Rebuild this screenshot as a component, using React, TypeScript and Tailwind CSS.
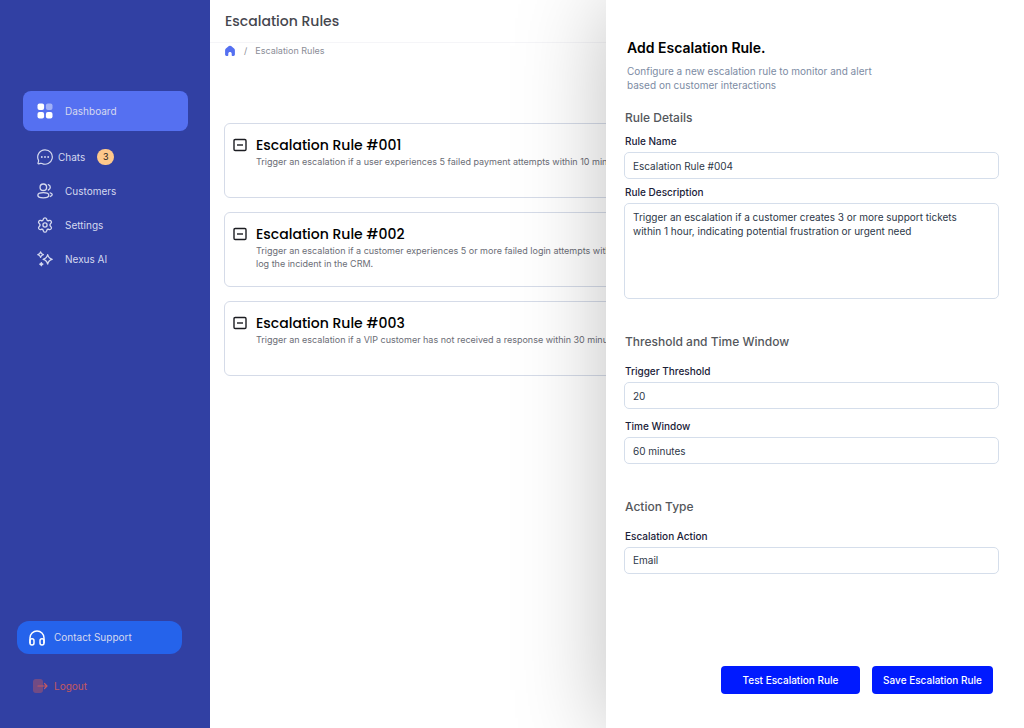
import type { ReactNode } from "react";

const iconBase = {
  viewBox: "0 0 24 24",
  fill: "none",
  stroke: "currentColor",
  strokeWidth: 1.6,
  strokeLinecap: "round" as const,
  strokeLinejoin: "round" as const,
  "aria-hidden": true,
};

function GridIcon() {
  return (
    <svg viewBox="0 0 16 16" className="size-4 shrink-0" fill="currentColor" aria-hidden="true">
      <rect x="0.5" y="0.5" width="6.6" height="6.6" rx="2" />
      <rect x="8.9" y="0.5" width="6.6" height="6.6" rx="2" opacity="0.45" />
      <rect x="0.5" y="8.9" width="6.6" height="6.6" rx="2" />
      <rect x="8.9" y="8.9" width="6.6" height="6.6" rx="2" />
    </svg>
  );
}

function ChatIcon() {
  return (
    <svg {...iconBase} strokeWidth={1.8} className="size-4 shrink-0">
      <path d="M12 1.2a10.8 10.8 0 1 1-4.6 20.5c-.8-.3-1.5-.3-2.3-.1l-2.6.7c-.7.2-1.2-.4-1-1.1l.8-2.6c.2-.7.1-1.4-.2-2.1A10.8 10.8 0 0 1 12 1.2Z" />
      <g fill="currentColor" stroke="none">
        <circle cx="7.2" cy="12" r="1.4" />
        <circle cx="12" cy="12" r="1.4" />
        <circle cx="16.8" cy="12" r="1.4" />
      </g>
    </svg>
  );
}

function CustomersIcon() {
  return (
    <svg {...iconBase} strokeWidth={2} className="size-4 shrink-0">
      <circle cx="9.5" cy="6.4" r="4.9" />
      <ellipse cx="9.5" cy="18.4" rx="8.2" ry="3.9" />
      <path d="M17 2.5a4.2 4.2 0 0 1 0 8M19.8 14.8c1.8.4 3 1.3 3 2.6s-1.1 2.3-2.8 2.8" />
    </svg>
  );
}

function SettingsIcon() {
  return (
    <svg {...iconBase} strokeWidth={2} className="size-4 shrink-0">
      <circle cx="12" cy="12" r="3.1" />
      <path d="M9.6 2.8c.4-1.1 1.2-1.6 2.4-1.6s2 .5 2.4 1.6l.4 1.5c.3.9 1.4 1.5 2.3 1.3l1.6-.4c1.2-.2 2 .2 2.6 1.2s.6 1.9-.2 2.8l-1.1 1.2a2.4 2.4 0 0 0 0 3.2l1.1 1.2c.8.9.8 1.8.2 2.8s-1.4 1.4-2.6 1.2l-1.6-.4c-.9-.2-2 .4-2.3 1.3l-.4 1.5c-.4 1.1-1.2 1.6-2.4 1.6s-2-.5-2.4-1.6l-.4-1.5c-.3-.9-1.4-1.5-2.3-1.3l-1.6.4c-1.2.2-2-.2-2.6-1.2s-.6-1.9.2-2.8L4 13.6a2.4 2.4 0 0 0 0-3.2L2.9 9.2c-.8-.9-.8-1.8-.2-2.8s1.4-1.4 2.6-1.2l1.6.4c.9.2 2-.4 2.3-1.3Z" />
    </svg>
  );
}

function SparklesIcon() {
  return (
    <svg {...iconBase} strokeWidth={1.9} className="size-4 shrink-0">
      <path d="M16 5.5c.9 4 2.5 5.9 6.8 7-4.3 1.1-5.9 3-6.8 7-.9-4-2.5-5.9-6.8-7 4.3-1.1 5.9-3 6.8-7Z" />
      <path d="M5.4 1.3c.5 2.4 1.6 3.6 4.2 4.2-2.6.6-3.7 1.8-4.2 4.2-.5-2.4-1.6-3.6-4.2-4.2 2.6-.6 3.7-1.8 4.2-4.2Z" />
      <path fill="currentColor" d="M6.5 17.3c.3 1.4.9 2.1 2.4 2.4-1.5.4-2.1 1-2.4 2.4-.3-1.4-.9-2-2.4-2.4 1.5-.3 2.1-1 2.4-2.4Z" />
    </svg>
  );
}

function HeadphonesIcon() {
  return (
    <svg {...iconBase} strokeWidth={2.2} className="size-4 shrink-0 text-white">
      <path d="M1.5 19V11.8a10.5 10.3 0 0 1 21 0V19" />
      <rect x="1.5" y="13.2" width="6" height="9.3" rx="3" />
      <rect x="16.5" y="13.2" width="6" height="9.3" rx="3" />
    </svg>
  );
}

function LogoutIcon() {
  return (
    <svg viewBox="0 0 16 16" className="size-4 shrink-0" fill="none" aria-hidden="true">
      <rect x="1" y="1" width="10" height="14" rx="3" fill="currentColor" opacity="0.45" />
      <path d="M6 8h9M12.5 5.5 15 8l-2.5 2.5" stroke="currentColor" strokeWidth="1.2" strokeLinecap="round" strokeLinejoin="round" />
    </svg>
  );
}

function HomeIcon() {
  return (
    <svg viewBox="0 0 12 12" className="size-3 shrink-0 text-[#5570f1]" fill="currentColor" aria-hidden="true">
      <path d="M4.9 1.1a1.7 1.7 0 0 1 2.2 0l3 2.5c.5.4.8 1 .8 1.6v4.3c0 .8-.6 1.4-1.4 1.4H8.4c-.4 0-.7-.3-.7-.7V8.4c0-.9-.7-1.5-1.7-1.5s-1.7.6-1.7 1.5v1.8c0 .4-.3.7-.7.7H2.5c-.8 0-1.4-.6-1.4-1.4V5.2c0-.6.3-1.2.8-1.6Z" />
    </svg>
  );
}

function MinusSquareIcon() {
  return (
    <svg viewBox="0 0 14 14" className="size-3.5 shrink-0" fill="none" stroke="#1c1d22" strokeWidth="1.4" aria-hidden="true">
      <rect x="1" y="1.5" width="12" height="11" rx="1.2" />
      <path d="M4 7h6" />
    </svg>
  );
}

const navItems = [
  { label: "Customers", icon: <CustomersIcon /> },
  { label: "Settings", icon: <SettingsIcon /> },
  { label: "Nexus AI", icon: <SparklesIcon /> },
];

const rules = [
  {
    title: "Escalation Rule #001",
    text: "Trigger an escalation if a user experiences 5 failed payment attempts within 10 minutes.",
  },
  {
    title: "Escalation Rule #002",
    text: "Trigger an escalation if a customer experiences 5 or more failed login attempts within 15 minutes, and log the incident in the CRM.",
  },
  {
    title: "Escalation Rule #003",
    text: "Trigger an escalation if a VIP customer has not received a response within 30 minutes.",
  },
];

const control =
  "mt-1 block w-full appearance-none rounded-[5px] border border-[#d5deeb] bg-white px-2 text-[10px] text-[#2d3748] outline-none focus:border-[#5570f1]";

function Field({ id, label, children }: { id: string; label: string; children: ReactNode }) {
  return (
    <div>
      <label htmlFor={id} className="block pl-px text-[10px] leading-[14px] font-medium text-[#1a2138]">
        {label}
      </label>
      {children}
    </div>
  );
}

function SectionTitle({ children }: { children: ReactNode }) {
  return <h3 className="pl-px text-[12px] leading-4 font-medium text-[#54575c]">{children}</h3>;
}

function Sidebar() {
  return (
    <aside className="flex w-[210px] shrink-0 flex-col bg-[#3140a3] pt-[91px] pb-[30px] text-[10px] text-[#d5d9ef]">
      <nav className="flex flex-col">
        <a href="#dashboard" aria-current="page" className="mr-[22px] mb-[9px] ml-[23px] flex h-10 items-center gap-3 rounded-lg bg-[#5570f1] px-[14px]">
          <span className="flex text-white"><GridIcon /></span>
          Dashboard
        </a>
        <a href="#chats" className="mr-[22px] ml-[23px] flex h-[34px] items-center px-[14px]">
          <ChatIcon />
          <span className="ml-[5px]">Chats</span>
          <span className="ml-3 flex h-4 w-[17px] items-center justify-center rounded-full bg-[#fec88b] text-[9px] text-[#1c1d22]">3</span>
        </a>
        {navItems.map((item) => (
          <a key={item.label} href={`#${item.label}`} className="mr-[22px] ml-[23px] flex h-[34px] items-center gap-3 px-[14px]">
            {item.icon}
            {item.label}
          </a>
        ))}
      </nav>
      <div className="mt-auto flex flex-col">
        <a href="#support" className="mr-7 ml-[17px] flex h-[33px] items-center gap-[9px] rounded-xl bg-[#2563eb] px-3">
          <HeadphonesIcon />
          Contact Support
        </a>
        <button type="button" className="mt-5 ml-8 flex h-6 items-center gap-[6px] self-start text-[#c4595f]">
          <LogoutIcon />
          Logout
        </button>
      </div>
    </aside>
  );
}

function RuleDrawer() {
  return (
    <section
      aria-labelledby="drawer-title"
      className="absolute inset-y-0 right-0 flex w-[418px] flex-col bg-white pt-[38px] pr-[25px] pb-[34px] pl-[18px] shadow-[0_4px_84px_rgba(0,0,0,0.25)]"
    >
      <header className="pl-[3px]">
        <h2 id="drawer-title" className="text-[14px] leading-5 font-semibold text-black">Add Escalation Rule.</h2>
        <p className="mt-[6px] w-64 text-[10px] leading-[14px] text-[#7c8ba3]">
          Configure a new escalation rule to monitor and alert based on customer interactions
        </p>
      </header>
      <form className="flex grow flex-col" onSubmit={(event) => event.preventDefault()}>
        <div className="mt-[18px] flex flex-col">
          <SectionTitle>Rule Details</SectionTitle>
          <div className="mt-2 flex flex-col gap-[6px]">
            <Field id="rule-name" label="Rule Name">
              <input id="rule-name" type="text" defaultValue="Escalation Rule #004" className={`${control} h-[27px]`} />
            </Field>
            <Field id="rule-description" label="Rule Description">
              <textarea
                id="rule-description"
                defaultValue="Trigger an escalation if a customer creates 3 or more support tickets within 1 hour, indicating potential frustration or urgent need"
                className={`${control} h-24 resize-none py-[6px] pr-9 leading-[14px]`}
              />
            </Field>
          </div>
        </div>
        <div className="mt-[35px] flex flex-col">
          <SectionTitle>Threshold and Time Window</SectionTitle>
          <div className="mt-[14px] flex flex-col gap-[10px]">
            <Field id="threshold" label="Trigger Threshold">
              <input id="threshold" type="text" defaultValue="20" className={`${control} h-[27px]`} />
            </Field>
            <Field id="time-window" label="Time Window">
              <input id="time-window" type="text" defaultValue="60 minutes" className={`${control} h-[27px]`} />
            </Field>
          </div>
        </div>
        <div className="mt-[35px] flex flex-col gap-[14px]">
          <SectionTitle>Action Type</SectionTitle>
          <Field id="action" label="Escalation Action">
            <select id="action" defaultValue="Email" className={`${control} h-[27px]`}>
              <option>Email</option>
            </select>
          </Field>
        </div>
        <div className="mt-auto flex justify-end gap-3 pr-[6px] text-[10px] font-medium text-white">
          <button type="button" className="h-7 w-[139px] rounded-[4px] bg-[#001aff]">Test Escalation Rule</button>
          <button type="submit" className="h-7 w-[121px] rounded-[4px] bg-[#001aff]">Save Escalation Rule</button>
        </div>
      </form>
    </section>
  );
}

export default function App() {
  return (
    <div className="relative flex min-h-screen overflow-hidden bg-white font-[Inter,sans-serif]">
      <Sidebar />
      <main className="min-w-0 grow">
        <header className="flex h-[43px] items-center border-b border-[#f5f5f8] pl-[15px]">
          <h1 className="font-[Poppins,Inter,sans-serif] text-[14px] font-medium text-[#45464e]">Escalation Rules</h1>
        </header>
        <nav aria-label="Breadcrumb" className="flex h-4 items-center gap-2 pl-[14px] text-[9px] text-[#8b8d97]">
          <a href="#home" aria-label="Home"><HomeIcon /></a>
          <span>/</span>
          <span>Escalation Rules</span>
        </nav>
        <div className="mt-16 flex flex-col gap-[14px] pr-6 pl-[14px]">
          {rules.map((rule) => (
            <article key={rule.title} className="flex h-[75px] items-start gap-[9px] rounded-md border border-[#d5dbe8] px-2 pt-[11px]">
              <button type="button" aria-label={`Collapse ${rule.title}`} className="mt-[3px]">
                <MinusSquareIcon />
              </button>
              <div>
                <h2 className="font-[Poppins,Inter,sans-serif] text-[14px] leading-5 font-medium text-black">{rule.title}</h2>
                <p className="w-[440px] text-[9px] leading-[13px] text-[#6b6d76]">{rule.text}</p>
              </div>
            </article>
          ))}
        </div>
      </main>
      <RuleDrawer />
    </div>
  );
}
